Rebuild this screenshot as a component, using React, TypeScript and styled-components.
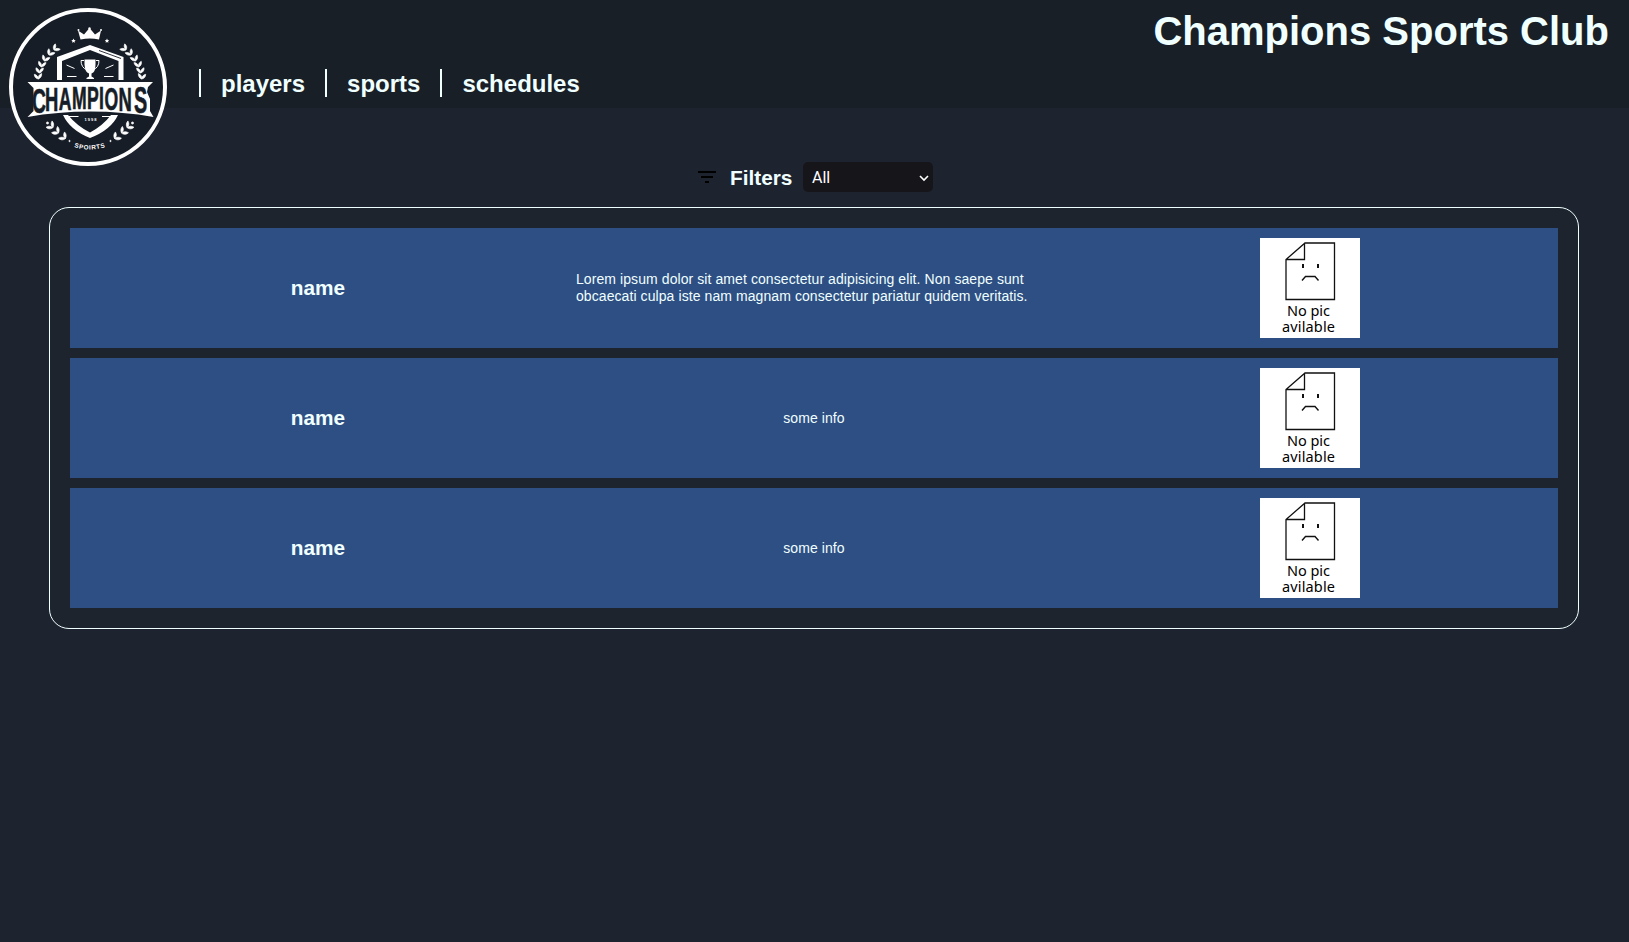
import React from "react";
import styled, { createGlobalStyle } from "styled-components";

const GlobalStyle = createGlobalStyle`
  * { box-sizing: border-box; }
  body {
    margin: 0;
    min-height: 942px;
    background: #1e242f;
    color: azure;
    font-family: "Liberation Sans", Arial, sans-serif;
  }
`;

const Header = styled.header`
  display: flex;
  align-items: flex-start;
  height: 108px;
  padding: 7px 20px 0 8px;
  background: #181f26;
`;

const Nav = styled.nav`
  display: flex;
  margin: 62px auto 0 31px;
`;

const NavLink = styled.a`
  height: 28px;
  padding: 0 20px;
  border-left: 2px solid azure;
  font-size: 24px;
  line-height: 29px;
  font-weight: bold;
`;

const Title = styled.h1`
  margin: 1px 0 0;
  font-size: 40px;
  line-height: 46px;
`;

const Filters = styled.div`
  display: flex;
  align-items: center;
  height: 30px;
  margin: 54px 0 15px 698px;
`;

const FilterLabel = styled.h2`
  width: 63px;
  margin: 2px 10px 0 14px;
  font-size: 20.8px;
  line-height: 24px;
`;

const Select = styled.div`
  display: flex;
  align-items: center;
  justify-content: space-between;
  width: 130px;
  height: 30px;
  padding: 1px 4px 0 9px;
  border-radius: 5px;
  background: #16151a;
  color: #fff;
  font: 16px Roboto, sans-serif;
`;

const List = styled.main`
  display: grid;
  gap: 10px;
  margin: 0 50px 0 49px;
  padding: 20px;
  border: 1px solid azure;
  border-radius: 20px;
  background: #1d242e;
`;

const Row = styled.article`
  display: grid;
  grid-template-columns: repeat(3, 1fr);
  place-items: center;
  height: 120px;
  background: #2e4f83;
`;

const Name = styled.h2`
  margin: 0;
  font-size: 20.8px;
  line-height: 24px;
`;

const Info = styled.p`
  margin: 0;
  padding: 0 10px;
  font-size: 14px;
  line-height: 17px;
  letter-spacing: 0.08px;
`;

const branch = [
  [38.5, 78, -8], [39.5, 72, 0], [41.5, 66, 8], [44.5, 60, 20], [49, 54, 32], [54, 49, 46],
];
const sprig = [[53, 126.5], [58.5, 132], [65.5, 137.5]];
const leaf = "M0 0C-1.900-2-1.600-4.500 0-6.300C1.400-4.500 1.400-2 0 0Z";

const Leaves = ({ mirror = false }: { mirror?: boolean }) => (
  <g transform={mirror ? "translate(180 0) scale(-1 1)" : undefined} fill="#fff" stroke="#fff" strokeWidth=".6">
    {branch.map(([x, y, a]) => (
      <g key={y} transform={`translate(${x} ${y}) rotate(${a})`}>
        <path d={leaf} transform="rotate(-34)" />
        <path d={leaf} transform="rotate(38)" />
      </g>
    ))}
    {sprig.map(([x, y]) => (
      <g key={y} transform={`translate(${x} ${y})`}>
        <path d={leaf} transform="rotate(-88) scale(1.100)" />
        <path d={leaf} transform="rotate(-8) scale(1.050)" />
      </g>
    ))}
    <circle cx="47.5" cy="122" r="1.100" />
    <circle cx="69.5" cy="140" r=".7" />
  </g>
);

const wordmark: [string, number, number, number][] = [
  ["C", 32, 112, 35], ["H", 45, 110, 33.5], ["A", 58.800, 109, 32], ["M", 72, 108.500, 32],
  ["P", 87, 108.500, 32], ["I", 99, 108.500, 32], ["O", 104.5, 108.800, 32], ["N", 118.5, 110, 33.5], ["S", 134, 112, 36],
];
const squeeze = 0.55;

const Logo = () => (
  <svg width="160" height="160" viewBox="8 7 160 160" fontFamily="Liberation Sans, sans-serif">
    <circle cx="88" cy="87" r="77" fill="#161d27" stroke="#fff" strokeWidth="4" />
    <g transform="translate(0 1)">
      <Leaves />
      <Leaves mirror />
      <path d="M57 79V56L90 44l33.500 12v23h-5V60L90 49 62 60v19Z" fill="#fff" />
      <path d="M99 49.500l22 8" stroke="#161d27" strokeWidth=".9" />
      <g fill="#fff">
        <path d="M80.500 38.500l-2.500-9 6 4 5.500-6.500 5.500 6.500 6-4-2 9q-9-2-18.500 0Z" />
        <circle cx="78.500" cy="29" r="1" />
        <circle cx="89.500" cy="27.500" r="1.200" />
        <circle cx="101" cy="29" r="1" />
        <path d="M73.500 37.500l.7 1.500 1.500.2-1.100 1.100.3 1.500-1.400-.7-1.400.7.3-1.500-1.100-1.100 1.500-.2ZM107 37.500l.7 1.500 1.500.2-1.100 1.100.3 1.500-1.400-.7-1.400.7.3-1.500-1.100-1.100 1.500-.2Z" />
        <path d="M84.500 58.500h11v5q0 8-4 9v3l2.500 1.500v1h-7.500v-1l2.500-1.500v-3q-4-1-4.500-9Z" />
        <path d="M27.500 81h125.500l-5 5-1 5 3 7v12l3.500 6q-30-5.500-63-5.500t-63 5.500l6-6V87Z" />
        <path d="M63 114h5q9 11 22 17.500 13-7 21-17.500h7q-7 15-28 23-20-8-27-23Z" />
      </g>
      <path d="M84 59.500h-3q0 7 6 9.500M96 59.500h3q0 7-6 9.500" fill="none" stroke="#fff" />
      <path d="M66.500 64l8 3.500M67 75.500h9.500M113.500 64l-8 3.500M104 75.500h9.500" stroke="#fff" />
      <path d="M67 115.500h11.500M102 115.500h11" stroke="#fff" />
      <text transform={`scale(${squeeze} 1)`} fill="#161d27" stroke="#161d27" strokeWidth=".7" fontWeight="bold">
        {wordmark.map(([letter, x, y, size]) => (
          <tspan key={letter} x={x / squeeze} y={y} fontSize={size}>{letter}</tspan>
        ))}
      </text>
      <text x="84.500" y="120" textLength="12" fill="#fff" fontSize="4" fontWeight="bold">1998</text>
      <path id="logo-bottom" d="M74 146q16 5.500 35-1" fill="none" />
      <text fill="#fff" fontSize="6.300" fontWeight="bold" letterSpacing=".65">
        <textPath href="#logo-bottom">SPOIRTS</textPath>
      </text>
    </g>
  </svg>
);

const MissingPicture = () => (
  <svg width="100" height="100" viewBox="0 0 100 100" fontFamily="Noto Sans, sans-serif">
    <path fill="#fff" d="M0 0h100v100H0Z" />
    <path d="M45 5h29.500v56.500H26V21.500ZM44.500 5v16.500H26" fill="none" stroke="#111" strokeWidth="1.300" />
    <path d="M43 26v4M58 26v4" stroke="#111" strokeWidth="2" />
    <path d="M42 42.500l3.500-4h9.500l3.500 4" fill="none" stroke="#111" strokeWidth="1.400" />
    <text fontSize="14.500">
      <tspan x="27" y="78" textLength="43">No pic</tspan>
      <tspan x="22" y="94" textLength="53">avilable</tspan>
    </text>
  </svg>
);

const players = [
  "Lorem ipsum dolor sit amet consectetur adipisicing elit. Non saepe sunt obcaecati culpa iste nam magnam consectetur pariatur quidem veritatis.",
  "some info",
  "some info",
];

export default function App() {
  return (
    <>
      <GlobalStyle />
      <Header>
        <Logo />
        <Nav>
          <NavLink>players</NavLink>
          <NavLink>sports</NavLink>
          <NavLink>schedules</NavLink>
        </Nav>
        <Title>Champions Sports Club</Title>
      </Header>
      <Filters>
        <svg width="18" height="12" viewBox="0 0 18 12"><path d="M0 0h18v2H0ZM3 5h12v2H3ZM7 10h4v2H7Z" /></svg>
        <FilterLabel>Filters</FilterLabel>
        <Select>
          All
          <svg width="10" height="8" viewBox="0 0 10 8"><path d="M1 2l4 4 4-4" fill="none" stroke="#fff" strokeWidth="1.600" /></svg>
        </Select>
      </Filters>
      <List>
        {players.map((info, i) => (
          <Row key={i}>
            <Name>name</Name>
            <Info>{info}</Info>
            <MissingPicture />
          </Row>
        ))}
      </List>
    </>
  );
}
